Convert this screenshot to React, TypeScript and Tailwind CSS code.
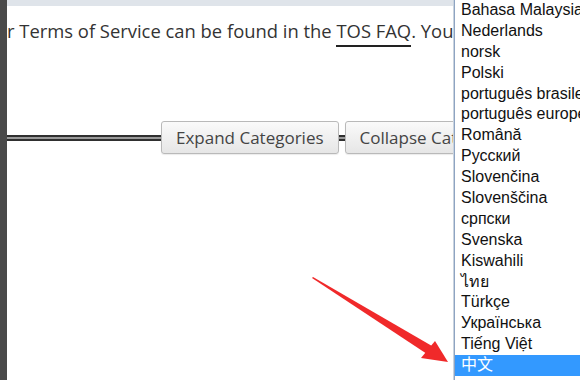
import React from 'react';

const languages = [
  'Bahasa Malaysia',
  'Nederlands',
  'norsk',
  'Polski',
  'português brasileiro',
  'português europeu',
  'Română',
  'Русский',
  'Slovenčina',
  'Slovenščina',
  'српски',
  'Svenska',
  'Kiswahili',
  'ไทย',
  'Türkçe',
  'Українська',
  'Tiếng Việt',
  '中文',
];

const Rule: React.FC<{ w: string }> = ({ w }) => (
  <div className={`${w} h-[6px] shrink-0 border-y-2 border-[#2f2f2f] bg-[#9a9a9a]`} />
);

const App: React.FC = () => {
  return (
    <div className="relative flex w-[580px] h-[380px] overflow-hidden bg-white">
      {/* left edge of the window behind */}
      <div className="w-[7px] h-full shrink-0 bg-[#4a4a4a]" />

      {/* page content */}
      <div className="w-[447px] h-full shrink-0 flex flex-col overflow-hidden border-r border-[#c9d3df]">
        <div className="h-[6px] shrink-0 bg-[#dfe4ea]" />
        <p className="mt-[13px] whitespace-nowrap text-[18.4px] leading-[24px] text-[#333] font-['Open_Sans',sans-serif]">
          r Terms of Service can be found in the{' '}
          <span className="border-b-2 border-[#222] pb-[2px]">TOS FAQ</span>. You
        </p>

        <div className="mt-[78px] flex items-center">
          <Rule w="w-[154px]" />
          <button className="shrink-0 h-[33px] px-[14px] rounded-[3px] border border-[#b9b9b9] bg-gradient-to-b from-[#fafafa] to-[#e6e6e6] text-[17px] text-[#444] font-['Open_Sans',sans-serif] shadow-[0_1px_1px_rgba(0,0,0,0.08)]">
            Expand Categories
          </button>
          <Rule w="w-[6px]" />
          <button className="shrink-0 h-[33px] px-[14px] rounded-[3px] border border-[#b9b9b9] bg-gradient-to-b from-[#fafafa] to-[#e6e6e6] text-[17px] text-[#444] font-['Open_Sans',sans-serif] shadow-[0_1px_1px_rgba(0,0,0,0.08)]">
            Collapse Categories
          </button>
        </div>
      </div>

      {/* language dropdown */}
      <div className="flex-1 h-full border-l border-[#8ea4c2] bg-white flex flex-col overflow-hidden font-['Liberation_Sans',Arial,'Noto_Sans_CJK_SC',sans-serif] text-[16px] text-[#111]">
        {languages.map((lang) => (
          <div
            key={lang}
            className={`h-[20.9px] shrink-0 leading-[20.9px] pl-[6px] whitespace-nowrap ${
              lang === '中文' ? 'bg-[#3399ff] text-white' : ''
            }`}
          >
            {lang}
          </div>
        ))}
      </div>

      {/* red annotation arrow */}
      <svg className="absolute left-[300px] top-[270px]" width="160" height="100" viewBox="0 0 160 100">
        <polygon points="13,7 132,76 127,84 12,8" fill="#f0292a" />
        <polygon points="148,92 121,88 135,71" fill="#f0292a" />
      </svg>
    </div>
  );
};

export default App;
